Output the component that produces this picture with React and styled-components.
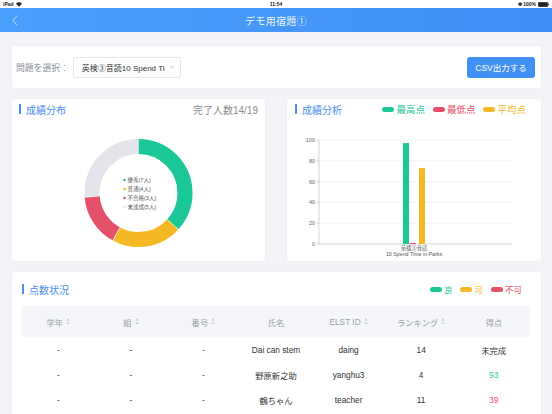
import React from 'react';
import styled, { createGlobalStyle } from 'styled-components';

const GlobalStyle = createGlobalStyle`
  html, body {
    margin: 0;
    padding: 0;
    background: #f2f4f7;
    font-family: "Liberation Sans", "Noto Sans CJK JP", sans-serif;
  }
  * { box-sizing: border-box; }
`;

const GREEN = '#1cc797';
const YELLOW = '#f6b926';
const RED = '#e5506a';
const GRAY = '#e3e5eb';
const BLUE = '#4a8eec';

const Screen = styled.div`
  width: 552px;
  height: 414px;
  overflow: hidden;
  background: #f2f4f7;
`;

const StatusBar = styled.div`
  height: 8px;
  background: #fff;
  display: flex;
  align-items: center;
  justify-content: space-between;
  padding: 0 3px;
  font-size: 5px;
  color: #222;
  font-weight: 600;
`;

const StatusSide = styled.div`
  display: flex;
  align-items: center;
  gap: 2px;
  width: 60px;
  justify-content: ${(p) => (p.$right ? 'flex-end' : 'flex-start')};
`;

const NavBar = styled.div`
  height: 24px;
  background: linear-gradient(90deg, #4aa0fa, #3f8ef5);
  display: flex;
  align-items: center;
  justify-content: center;
  position: relative;
`;

const BackButton = styled.div`
  position: absolute;
  left: 12px;
  top: 6px;
  width: 8px;
  height: 12px;
  display: flex;
  align-items: center;
`;

const NavTitle = styled.div`
  color: rgba(255, 255, 255, 0.95);
  font-size: 10px;
  letter-spacing: 0.3px;
`;

const Content = styled.div`
  padding: 14px 11px 0 12px;
  display: flex;
  flex-direction: column;
  gap: 11px;
`;

const Card = styled.div`
  background: #fff;
  border-radius: 3px;
  box-shadow: 0 0 3px rgba(0, 0, 0, 0.03);
`;

const FilterCard = styled(Card)`
  height: 42px;
  display: flex;
  align-items: center;
  justify-content: space-between;
  padding: 0 6px 0 4px;
`;

const FilterGroup = styled.div`
  display: flex;
  align-items: center;
  gap: 4px;
`;

const FilterLabel = styled.span`
  font-size: 8.8px;
  color: #8a8f99;
  white-space: nowrap;
`;

const SelectBox = styled.div`
  width: 108px;
  height: 21px;
  border: 1px solid #e6e8ec;
  border-radius: 2px;
  display: flex;
  align-items: center;
  padding: 0 5px 0 8px;
  gap: 4px;
  font-size: 8px;
  color: #333;
`;

const SelectText = styled.span`
  flex: 1;
  white-space: nowrap;
  overflow: hidden;
`;

const CsvButton = styled.button`
  width: 68px;
  height: 21px;
  border: none;
  border-radius: 3px;
  background: #4191f5;
  color: #fff;
  font-family: inherit;
  font-size: 8.5px;
  padding: 0;
`;

const ChartRow = styled.div`
  display: grid;
  grid-template-columns: 253px 254px;
  gap: 22px;
`;

const ChartCard = styled(Card)`
  height: 162px;
  display: flex;
  flex-direction: column;
`;

const CardHead = styled.div`
  height: 20px;
  display: flex;
  align-items: center;
  justify-content: space-between;
  padding: ${(p) => p.$pad || '0 7px'};
`;

const CardTitle = styled.div`
  display: flex;
  align-items: center;
  gap: 5px;
  font-size: 10px;
  color: ${BLUE};
  &::before {
    content: '';
    width: 2px;
    height: 10px;
    background: ${BLUE};
  }
`;

const Counter = styled.span`
  font-size: 10px;
  color: #8c8c8c;
`;

const Legend = styled.div`
  display: flex;
  align-items: center;
  gap: ${(p) => p.$gap || 8}px;
`;

const LegendItem = styled.div`
  display: flex;
  align-items: center;
  gap: 2px;
  font-size: ${(p) => p.$size || 9.5}px;
  color: ${(p) => p.$color};
  &::before {
    content: '';
    width: 12px;
    height: 5px;
    border-radius: 3px;
    background: ${(p) => p.$color};
  }
`;

const ScoreCard = styled(Card)`
  height: 160px;
  padding: 8px 11px 0 10px;
`;

const ScoreHead = styled.div`
  height: 18px;
  display: flex;
  align-items: center;
  justify-content: space-between;
  margin-bottom: 8px;
  padding-right: 8px;
`;

const Row = styled.div`
  display: grid;
  grid-template-columns: repeat(7, 1fr);
  height: ${(p) => (p.$head ? 31 : 25)}px;
  align-items: center;
  background: ${(p) => (p.$head ? '#f5f6f9' : '#fff')};
  font-size: 8.3px;
  color: ${(p) => (p.$head ? '#9a9ea6' : '#333')};
`;

const Cell = styled.div`
  display: flex;
  align-items: center;
  justify-content: center;
  gap: 3px;
  color: ${(p) => p.$color || 'inherit'};
  white-space: nowrap;
`;

const SortIcon = () => (
  <svg width="4" height="7" viewBox="0 0 4 7">
    <path d="M2 0.5 L3.6 2.6 H0.4 Z" fill="#c3c6cc" />
    <path d="M2 6.5 L3.6 4.4 H0.4 Z" fill="#c3c6cc" />
  </svg>
);

const Donut = () => {
  const data = [
    { v: 7, c: GREEN },
    { v: 4, c: YELLOW },
    { v: 3, c: RED },
    { v: 5, c: GRAY },
  ];
  const total = 19;
  const r = 46.5;
  const circ = 2 * Math.PI * r;
  let acc = 0;
  const legend = [
    { c: GREEN, t: '優秀(7人)' },
    { c: YELLOW, t: '普通(4人)' },
    { c: RED, t: '不合格(3人)' },
    { c: GRAY, t: '未達成(5人)' },
  ];
  return (
    <svg width="253" height="142" viewBox="0 0 253 142">
      <g transform="rotate(-90 126.5 74)">
        {data.map((d, i) => {
          const len = (d.v / total) * circ;
          const el = (
            <circle
              key={i}
              cx="126.5"
              cy="74"
              r={r}
              fill="none"
              stroke={d.c}
              strokeWidth="15"
              strokeDasharray={`${len - 0.6} ${circ - len + 0.6}`}
              strokeDashoffset={-acc}
            />
          );
          acc += len;
          return el;
        })}
      </g>
      {legend.map((l, i) => (
        <g key={l.t}>
          <circle cx="112.5" cy={61 + i * 9} r="1.3" fill={l.c} />
          <text x="115.5" y={63 + i * 9} fontSize="5.5" fill="#555">
            {l.t}
          </text>
        </g>
      ))}
    </svg>
  );
};

const BarChart = () => {
  const y = (v) => 125 - v * 1.04;
  const ticks = [0, 20, 40, 60, 80, 100];
  return (
    <svg width="254" height="142" viewBox="0 0 254 142">
      {ticks.map((t) => (
        <g key={t}>
          <line x1="32" x2="225" y1={y(t)} y2={y(t)} stroke={t === 0 ? '#bfc2c7' : '#eceef1'} strokeWidth="0.7" />
          <line x1="29.5" x2="32" y1={y(t)} y2={y(t)} stroke="#bfc2c7" strokeWidth="0.7" />
          <text x="28" y={y(t) + 2} fontSize="5.5" fill="#666" textAnchor="end">
            {t}
          </text>
        </g>
      ))}
      <line x1="32" x2="32" y1={y(100)} y2={y(0)} stroke="#bfc2c7" strokeWidth="0.7" />
      <rect x="116" y={y(97)} width="6" height={97 * 1.04} fill={GREEN} />
      <rect x="123" y={y(1)} width="6" height={1.04} fill={RED} />
      <rect x="132" y={y(73)} width="6" height={73 * 1.04} fill={YELLOW} />
      <text x="127" y="130.5" fontSize="5.3" fill="#555" textAnchor="middle">
        英検③音読
      </text>
      <text x="127" y="137" fontSize="5.3" fill="#555" textAnchor="middle">
        10 Spend Time in Parks
      </text>
    </svg>
  );
};

const rows = [
  { name: 'Dai can stem', id: 'daing', rank: '14', score: '未完成', color: '#333' },
  { name: '野原新之助', id: 'yanghu3', rank: '4', score: '93', color: GREEN },
  { name: '鶴ちゃん', id: 'teacher', rank: '11', score: '39', color: RED },
];

export default function App() {
  return (
    <Screen>
      <GlobalStyle />
      <StatusBar>
        <StatusSide>
          <span>iPad</span>
          <svg width="6" height="5" viewBox="0 0 6 5">
            <path d="M0 1.6 A4.2 4.2 0 0 1 6 1.6 L3 4.8 Z" fill="#222" />
          </svg>
        </StatusSide>
        <span>11:54</span>
        <StatusSide $right>
          <span>✱ 100%</span>
          <svg width="11" height="5" viewBox="0 0 11 5">
            <rect x="0.3" y="0.3" width="9.4" height="4.4" rx="0.8" fill="#222" stroke="#222" strokeWidth="0.5" />
            <rect x="10" y="1.5" width="0.8" height="2" fill="#222" />
          </svg>
        </StatusSide>
      </StatusBar>
      <NavBar>
        <BackButton>
          <svg width="6" height="11" viewBox="0 0 6 11">
            <polyline points="5.2,0.6 0.8,5.5 5.2,10.4" fill="none" stroke="rgba(255,255,255,0.7)" strokeWidth="0.9" />
          </svg>
        </BackButton>
        <NavTitle>デモ用宿題①</NavTitle>
      </NavBar>
      <Content>
        <FilterCard>
          <FilterGroup>
            <FilterLabel>問題を選択：</FilterLabel>
            <SelectBox>
              <SelectText>英検③音読10 Spend Time</SelectText>
              <svg width="6" height="4" viewBox="0 0 6 4">
                <polyline points="0.5,0.8 3,3.2 5.5,0.8" fill="none" stroke="#b5b9c0" strokeWidth="0.7" />
              </svg>
            </SelectBox>
          </FilterGroup>
          <CsvButton>CSV出力する</CsvButton>
        </FilterCard>
        <ChartRow>
          <ChartCard>
            <CardHead>
              <CardTitle>成績分布</CardTitle>
              <Counter>完了人数14/19</Counter>
            </CardHead>
            <Donut />
          </ChartCard>
          <ChartCard>
            <CardHead $pad="0 15px 0 8px">
              <CardTitle>成績分析</CardTitle>
              <Legend $gap={8}>
                <LegendItem $color={GREEN}>最高点</LegendItem>
                <LegendItem $color={RED}>最低点</LegendItem>
                <LegendItem $color={YELLOW}>平均点</LegendItem>
              </Legend>
            </CardHead>
            <BarChart />
          </ChartCard>
        </ChartRow>
        <ScoreCard>
          <ScoreHead>
            <CardTitle>点数状況</CardTitle>
            <Legend $gap={8}>
              <LegendItem $color={GREEN} $size={8.5}>良</LegendItem>
              <LegendItem $color={YELLOW} $size={8.5}>可</LegendItem>
              <LegendItem $color={RED} $size={8.5}>不可</LegendItem>
            </Legend>
          </ScoreHead>
          <Row $head>
            <Cell>学年<SortIcon /></Cell>
            <Cell>組<SortIcon /></Cell>
            <Cell>番号<SortIcon /></Cell>
            <Cell>氏名</Cell>
            <Cell>ELST ID<SortIcon /></Cell>
            <Cell>ランキング<SortIcon /></Cell>
            <Cell>得点</Cell>
          </Row>
          {rows.map((r) => (
            <Row key={r.id}>
              <Cell>-</Cell>
              <Cell>-</Cell>
              <Cell>-</Cell>
              <Cell>{r.name}</Cell>
              <Cell>{r.id}</Cell>
              <Cell>{r.rank}</Cell>
              <Cell $color={r.color}>{r.score}</Cell>
            </Row>
          ))}
        </ScoreCard>
      </Content>
    </Screen>
  );
}
